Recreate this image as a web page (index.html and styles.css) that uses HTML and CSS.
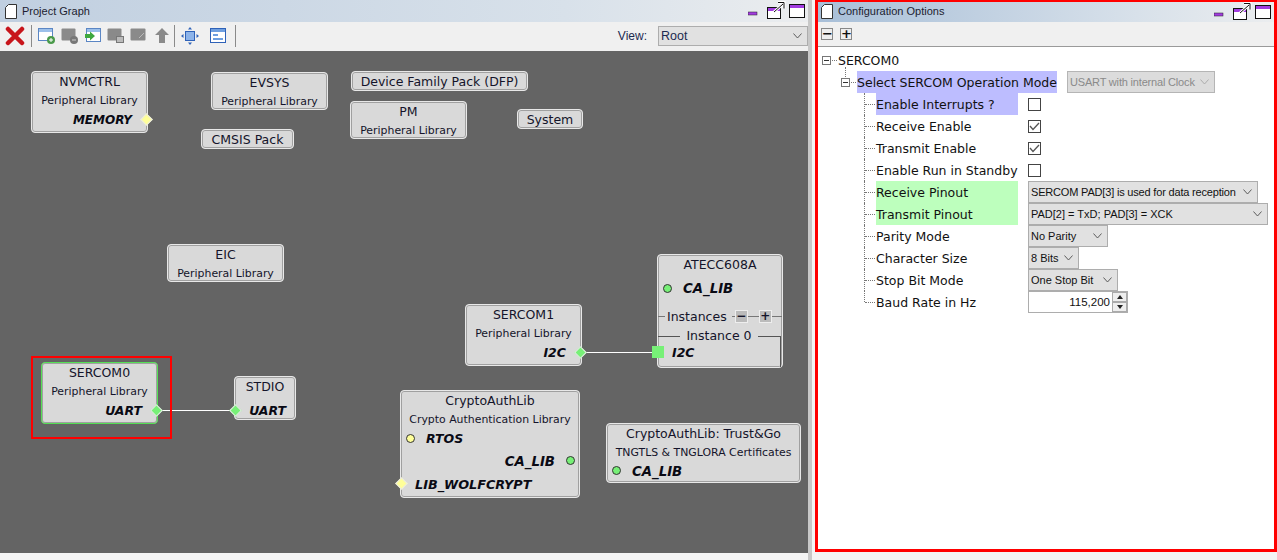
FILE: index.html
```html
<!DOCTYPE html>
<html lang="en">
<head>
  <meta charset="UTF-8">
  <title>Project Graph</title>
  <link rel="stylesheet" href="styles.css">
</head>
<body>
  <div class="graph-pane">
    <div class="title-bar">
      <svg class="doc-icon" width="12" height="15" viewBox="0 0 12 15"><path d="M3.5 .5H11.5V14.5H.5V3.5Z" fill="#fff" stroke="#333"/></svg>
      <span class="title-text">Project Graph</span>
      <div class="win-buttons">
        <svg width="60" height="18" viewBox="0 0 60 18">
          <rect x="0" y="11" width="9" height="3" fill="#a23ce0" stroke="#222" stroke-width=".5"/>
          <rect x="19.500" y="6.500" width="13" height="11" fill="#fff" stroke="#111"/>
          <rect x="20" y="7" width="12" height="3" fill="#a23ce0"/>
          <path d="M26 11L35 3M30 1.500H36V7.500" fill="none" stroke="#fff" stroke-width="3"/>
          <path d="M26 11L35 3M30 1.500H36V7.500" fill="none" stroke="#111"/>
          <rect x="41.500" y="3.500" width="15" height="13" fill="#fff" stroke="#111"/>
          <rect x="42" y="4" width="14" height="3" fill="#a23ce0"/>
        </svg>
      </div>
    </div>
    <div class="toolbar">
      <svg class="tool-x" width="20" height="20" viewBox="0 0 20 20"><path d="M3 3L17 17M17 3L3 17" stroke="#c8151b" stroke-width="4.500" stroke-linecap="round"/></svg>
      <span class="tool-sep"></span>
      <svg class="tool" width="18" height="18" viewBox="0 0 18 18"><rect x=".5" y="1.500" width="14" height="12" fill="#fff" stroke="#5b86c4"/><rect x="1" y="2" width="13" height="3" fill="#9cc0ea"/><circle cx="13" cy="13" r="4" fill="#4a9a4a"/><path d="M11 13H15M13 11V15" stroke="#fff"/></svg>
      <svg class="tool" width="18" height="18" viewBox="0 0 18 18"><rect x=".5" y="1.500" width="14" height="12" rx="1" fill="#8a8a8a"/><circle cx="13" cy="13" r="4" fill="#777"/><path d="M11 13H15" stroke="#ccc"/></svg>
      <svg class="tool" width="18" height="18" viewBox="0 0 18 18"><rect x="2.500" y="1.500" width="14" height="13" fill="#fff" stroke="#5b86c4"/><rect x="3" y="2" width="13" height="3" fill="#9cc0ea"/><path d="M1 7H6V4.500L11 9L6 13.500V11H1Z" fill="#3fa83f"/></svg>
      <svg class="tool" width="18" height="18" viewBox="0 0 18 18"><rect x=".5" y="1.500" width="14" height="12" rx="1" fill="#8a8a8a"/><rect x="9.500" y="9.500" width="7" height="6" fill="#bbb" stroke="#777"/></svg>
      <svg class="tool" width="18" height="18" viewBox="0 0 18 18"><rect x=".5" y="1.500" width="15" height="12" rx="1" fill="#8a8a8a"/><path d="M9 11L14 6" stroke="#bbb"/></svg>
      <svg class="tool" width="18" height="18" viewBox="0 0 18 18"><path d="M9 1L16 8H12V16H6V8H2Z" fill="#8a8a8a"/></svg>
      <span class="tool-sep sep-tight"></span>
      <svg class="tool tool-fit" width="18" height="18" viewBox="0 0 18 18"><rect x="4.500" y="4.500" width="9" height="9" fill="#8db4ea" stroke="#2f62b8"/><path d="M9 0L11 2.500H7ZM9 18L7 15.500H11ZM0 9L2.500 7V11ZM18 9L15.500 11V7Z" fill="#2f62b8"/></svg>
      <svg class="tool tool-panel" width="18" height="18" viewBox="0 0 18 18"><rect x="1.500" y="1.500" width="15" height="14" fill="#fff" stroke="#2f62b8"/><rect x="2" y="2" width="14" height="3" fill="#6f9fe0"/><rect x="4" y="7" width="5" height="2" fill="#6f9fe0"/><rect x="4" y="11" width="10" height="2" fill="#6f9fe0"/></svg>
      <span class="tool-sep sep-far"></span>
      <span class="view-label">View:</span>
      <div class="combo view-combo"><span class="combo-text">Root</span><svg class="chev" viewBox="0 0 10 6" preserveAspectRatio="none"><path d="M.5 .5L5 5L9.500 .5" fill="none" stroke="#555"/></svg></div>
    </div>

    <div class="canvas">
      <svg class="wires" width="808" height="502">
        <path d="M157 359.500H235M581 301.500H658" stroke="#fff"/>
      </svg>

      <div class="node n-nvmctrl">
        <div class="node-title">NVMCTRL</div>
        <div class="node-sub">Peripheral Library</div>
        <div class="node-port right">MEMORY</div>
        <span class="pin diamond yellow pin-right"></span>
      </div>
      <div class="node n-evsys">
        <div class="node-title">EVSYS</div>
        <div class="node-sub">Peripheral Library</div>
      </div>
      <div class="node n-dfp"><div class="node-title">Device Family Pack (DFP)</div></div>
      <div class="node n-pm">
        <div class="node-title">PM</div>
        <div class="node-sub">Peripheral Library</div>
      </div>
      <div class="node n-system"><div class="node-title">System</div></div>
      <div class="node n-cmsis"><div class="node-title">CMSIS Pack</div></div>
      <div class="node n-eic">
        <div class="node-title">EIC</div>
        <div class="node-sub">Peripheral Library</div>
      </div>
      <div class="node n-sercom1">
        <div class="node-title">SERCOM1</div>
        <div class="node-sub">Peripheral Library</div>
        <div class="node-port right">I2C</div>
        <span class="pin diamond green pin-right"></span>
      </div>
      <div class="node n-atecc">
        <div class="node-title">ATECC608A</div>
        <div class="node-port left cap-port">CA_LIB</div>
        <span class="pin dot green pin-atecc"></span>
        <div class="instances">
          <span class="inst-dash lead"></span>
          <span class="inst-text">Instances</span>
          <span class="inst-dash short"></span>
          <span class="inst-btn">−</span>
          <span class="inst-dash mid"></span>
          <span class="inst-btn">+</span>
          <span class="inst-dash"></span>
        </div>
        <div class="instance-box">
          <div class="instance-head">Instance 0</div>
          <div class="node-port left inst-port">I2C</div>
        </div>
        <span class="pin square green pin-inst"></span>
      </div>
      <div class="node n-sercom0 selected">
        <div class="node-title">SERCOM0</div>
        <div class="node-sub">Peripheral Library</div>
        <div class="node-port right">UART</div>
        <span class="pin diamond green pin-right"></span>
      </div>
      <div class="select-box"></div>
      <div class="node n-stdio">
        <div class="node-title">STDIO</div>
        <div class="node-port right stdio-port">UART</div>
        <span class="pin diamond green pin-stdio"></span>
      </div>
      <div class="node n-crypto">
        <div class="node-title">CryptoAuthLib</div>
        <div class="node-sub">Crypto Authentication Library</div>
        <div class="node-port left indent">RTOS</div>
        <div class="node-port right gutter">CA_LIB</div>
        <div class="node-port left wolf">LIB_WOLFCRYPT</div>
        <span class="pin dot yellow pin-rtos"></span>
        <span class="pin dot green pin-calib"></span>
        <span class="pin diamond yellow pin-wolf"></span>
      </div>
      <div class="node n-trust">
        <div class="node-title">CryptoAuthLib: Trust&amp;Go</div>
        <div class="node-sub">TNGTLS &amp; TNGLORA Certificates</div>
        <div class="node-port left indent">CA_LIB</div>
        <span class="pin dot green pin-trust"></span>
      </div>
    </div>
  </div>

  <div class="config-pane">
    <div class="title-bar">
      <svg class="doc-icon" width="12" height="15" viewBox="0 0 12 15"><path d="M3.5 .5H11.5V14.5H.5V3.5Z" fill="#fff" stroke="#333"/></svg>
      <span class="title-text">Configuration Options</span>
      <div class="win-buttons">
        <svg width="60" height="18" viewBox="0 0 60 18">
          <rect x="0" y="11" width="9" height="3" fill="#a23ce0" stroke="#222" stroke-width=".5"/>
          <rect x="19.500" y="6.500" width="13" height="11" fill="#fff" stroke="#111"/>
          <rect x="20" y="7" width="12" height="3" fill="#a23ce0"/>
          <path d="M26 11L35 3M30 1.500H36V7.500" fill="none" stroke="#fff" stroke-width="3"/>
          <path d="M26 11L35 3M30 1.500H36V7.500" fill="none" stroke="#111"/>
          <rect x="41.500" y="3.500" width="15" height="13" fill="#fff" stroke="#111"/>
          <rect x="42" y="4" width="14" height="3" fill="#a23ce0"/>
        </svg>
      </div>
    </div>
    <div class="config-tools">
      <span class="tree-btn">−</span>
      <span class="tree-btn">+</span>
    </div>
    <div class="tree">
      <div class="row row-root">
        <span class="expander"></span><span class="twig-h"></span>
        <span class="label">SERCOM0</span>
      </div>
      <div class="row row-mode">
        <span class="expander"></span><span class="twig-h"></span>
        <span class="label hl-blue">Select SERCOM Operation Mode</span>
        <div class="combo disabled mode-combo"><span class="combo-text">USART with internal Clock</span><svg class="chev" viewBox="0 0 10 6" preserveAspectRatio="none"><path d="M.5 .5L5 5L9.500 .5" fill="none" stroke="#aaa"/></svg></div>
      </div>
      <div class="row leaf"><span class="label wide hl-blue">Enable Interrupts ?</span><span class="check"></span></div>
      <div class="row leaf"><span class="label wide">Receive Enable</span><span class="check on"><svg width="11" height="9" viewBox="0 0 11 9"><path d="M1 4L4 7.500L10 1" fill="none" stroke="#555" stroke-width="1.300"/></svg></span></div>
      <div class="row leaf"><span class="label wide">Transmit Enable</span><span class="check on"><svg width="11" height="9" viewBox="0 0 11 9"><path d="M1 4L4 7.500L10 1" fill="none" stroke="#555" stroke-width="1.300"/></svg></span></div>
      <div class="row leaf"><span class="label wide">Enable Run in Standby</span><span class="check"></span></div>
      <div class="row leaf"><span class="label wide hl-green">Receive Pinout</span><div class="combo w-rx"><span class="combo-text">SERCOM PAD[3] is used for data reception</span><svg class="chev" viewBox="0 0 10 6" preserveAspectRatio="none"><path d="M.5 .5L5 5L9.500 .5" fill="none" stroke="#555"/></svg></div></div>
      <div class="row leaf"><span class="label wide hl-green">Transmit Pinout</span><div class="combo w-tx"><span class="combo-text">PAD[2] = TxD; PAD[3] = XCK</span><svg class="chev" viewBox="0 0 10 6" preserveAspectRatio="none"><path d="M.5 .5L5 5L9.500 .5" fill="none" stroke="#555"/></svg></div></div>
      <div class="row leaf"><span class="label wide">Parity Mode</span><div class="combo w-parity"><span class="combo-text">No Parity</span><svg class="chev" viewBox="0 0 10 6" preserveAspectRatio="none"><path d="M.5 .5L5 5L9.500 .5" fill="none" stroke="#555"/></svg></div></div>
      <div class="row leaf"><span class="label wide">Character Size</span><div class="combo w-size"><span class="combo-text">8 Bits</span><svg class="chev" viewBox="0 0 10 6" preserveAspectRatio="none"><path d="M.5 .5L5 5L9.500 .5" fill="none" stroke="#555"/></svg></div></div>
      <div class="row leaf"><span class="label wide">Stop Bit Mode</span><div class="combo w-stop"><span class="combo-text">One Stop Bit</span><svg class="chev" viewBox="0 0 10 6" preserveAspectRatio="none"><path d="M.5 .5L5 5L9.500 .5" fill="none" stroke="#555"/></svg></div></div>
      <div class="row leaf last"><span class="label wide">Baud Rate in Hz</span>
        <div class="spinner">
          <span class="spin-value">115,200</span>
          <div class="spin-btns"><span class="spin-btn up"></span><span class="spin-btn down"></span></div>
        </div>
      </div>
    </div>
  </div>
</body>
</html>
```

FILE: styles.css
```css
/* Basic reset */
* {
  box-sizing: border-box;
  margin: 0;
  padding: 0;
}

html, body {
  height: 560px;
  overflow: hidden;
}

body {
  display: flex;
  background-color: #f4f4f4;
  font-family: "DejaVu Sans", sans-serif;
  font-size: 12px;
  color: #111;
}

/* Panes */
.graph-pane {
  width: 812px;
  height: 560px;
  display: flex;
  flex-direction: column;
  border-right: 4px solid #c8c8c8;
}

.config-pane {
  width: 462px;
  height: 552px;
  margin-left: 3px;
  display: flex;
  flex-direction: column;
  border: solid #ff0000;
  border-width: 2px 3px 3px;
  background-color: #fff;
}

.title-bar {
  height: 22px;
  flex: none;
  display: flex;
  align-items: center;
  padding-left: 5px;
  background: linear-gradient(to right, #c0cfe0, #d8e1ea 70%, #ebedef);
}

.config-pane .title-bar {
  height: 20px;
  padding: 0 0 2px 3px;
  background: linear-gradient(to right, #a8bfd8, #d8e1ea 70%, #ebedef);
}

.doc-icon {
  flex: none;
}

.title-text {
  margin-left: 5px;
  font-family: "Liberation Sans", sans-serif;
  font-size: 11px;
  color: #1c1c30;
}

.win-buttons {
  margin-left: auto;
  align-self: flex-start;
  margin-top: 1px;
  height: 18px;
}

.config-pane .win-buttons {
  margin-top: 0;
}

/* Toolbar */
.toolbar {
  height: 29px;
  flex: none;
  display: flex;
  align-items: center;
  padding: 0 0 2px 5px;
  background-color: #f0f0f0;
}

.tool {
  margin-left: 5px;
  flex: none;
}

.tool-x {
  flex: none;
}

.tool-sep {
  width: 1px;
  height: 22px;
  flex: none;
  margin: 0 6px 0 6px;
  background-color: #8a8a8a;
}

.tool-sep.sep-tight {
  margin-left: 3px;
}

.tool-sep.sep-far {
  margin-left: 8px;
}

.tool-sep + .tool {
  margin-left: 0;
}

.tool-panel {
  margin-left: 10px;
}

.view-label {
  margin-left: auto;
  margin-right: 11px;
  font-family: "Liberation Sans", sans-serif;
  font-size: 12px;
  color: #1c2a50;
}

/* Combo boxes */
.combo {
  height: 22px;
  display: flex;
  align-items: center;
  justify-content: space-between;
  flex: none;
  padding: 0 5px 0 2px;
  border: 1px solid #adadad;
  background-color: #e1e1e1;
  font-family: "Liberation Sans", sans-serif;
  font-size: 11px;
  color: #111;
  white-space: nowrap;
}

.chev {
  width: 9px;
  height: 6px;
  flex: none;
}

.view-combo {
  width: 150px;
  height: 20px;
  font-size: 12.500px;
  color: #1c2a50;
}

.combo.disabled {
  color: #8a8a8a;
  background-color: #dcdcdc;
  border-color: #b5b5b5;
}

.mode-combo { width: 148px; margin-left: 10px; letter-spacing: -.18px; }
.w-rx { width: 230px; letter-spacing: -.18px; }
.w-tx { width: 240px; }
.w-parity { width: 80px; }
.w-size { width: 51px; }
.w-stop { width: 90px; }

/* Graph canvas */
.canvas {
  position: relative;
  width: 808px;
  height: 502px;
  background-color: #646464;
}

.wires {
  position: absolute;
  left: 0;
  top: 0;
}

.node {
  position: absolute;
  display: flex;
  flex-direction: column;
  border: 1px solid #e8e8e8;
  border-radius: 4px;
  background-color: #d9d9d9;
  box-shadow: inset 0 0 0 1px #a0a0a0;
  white-space: nowrap;
}

.node.selected {
  border-color: #55e055;
}

.node-title {
  height: 20px;
  line-height: 20px;
  text-align: center;
  font-size: 12.500px;
  color: #14142a;
}

.node-sub {
  height: 18px;
  line-height: 17px;
  text-align: center;
  font-size: 10.900px;
  color: #14142a;
}

.node-port {
  height: 20px;
  line-height: 20px;
  font-size: 12.500px;
  font-weight: bold;
  font-style: italic;
  color: #0a0a14;
}

.n-nvmctrl .node-port {
  font-size: 12px;
}

.n-trust .node-port {
  font-size: 13.300px;
}

.node-port.right {
  text-align: right;
  padding-right: 15px;
}

.node-port.left.indent {
  padding-left: 25px;
}

.node-port.gutter {
  padding-right: 24px;
  height: 22px;
  line-height: 22px;
  margin-top: 2px;
  font-size: 13.300px;
}

.node-port.wolf {
  padding-left: 14px;
  height: 24px;
  line-height: 24px;
  font-size: 12.800px;
}

.n-nvmctrl { left: 31px; top: 20px; width: 117px; height: 62px; }
.n-evsys { left: 211px; top: 21px; width: 117px; height: 38px; }
.n-dfp { left: 351px; top: 20px; width: 177px; height: 20px; }
.n-pm { left: 350px; top: 50px; width: 117px; height: 38px; }
.n-system { left: 517px; top: 58px; width: 66px; height: 20px; }
.n-cmsis { left: 201px; top: 78px; width: 93px; height: 20px; }
.n-eic { left: 167px; top: 193px; width: 117px; height: 38px; }
.n-sercom1 { left: 465px; top: 253px; width: 117px; height: 62px; }
.n-atecc { left: 657px; top: 203px; width: 126px; height: 114px; }
.n-sercom0 { left: 41px; top: 311px; width: 117px; height: 62px; }
.n-stdio { left: 234px; top: 325px; width: 62px; height: 44px; }
.n-crypto { left: 400px; top: 339px; width: 180px; height: 108px; }
.n-trust { left: 606px; top: 372px; width: 195px; height: 60px; }

.stdio-port {
  padding-right: 9px !important;
  margin-top: 4px;
}

.select-box {
  position: absolute;
  left: 31px;
  top: 305px;
  width: 141px;
  height: 83px;
  border: 2px solid #ff0000;
}

/* Pins on the node edges */
.pin {
  position: absolute;
  display: block;
}

.diamond {
  width: 9px;
  height: 9px;
  transform: rotate(45deg);
  border: 1px solid #e8e8e8;
}

.dot {
  width: 9px;
  height: 9px;
  border-radius: 50%;
  border: 1px solid #333;
}

.square {
  width: 12px;
  height: 12px;
}

.yellow { background-color: #ffff99; }
.green { background-color: #77f077; }

.pin-right { right: -4px; top: 43px; }
.pin-stdio { left: -4px; top: 29px; }
.pin-atecc { left: 5px; top: 29px; }
.pin-inst { left: -6px; top: 91px; }
.pin-rtos { left: 5px; top: 43px; }
.pin-calib { right: 4px; top: 65px; }
.pin-wolf { left: -4px; top: 88px; }
.pin-trust { left: 5px; top: 42px; }

/* ATECC instances block */
.cap-port {
  padding-left: 25px;
  margin-top: 4px;
  font-size: 13.300px;
}

.instances {
  display: flex;
  align-items: center;
  height: 20px;
  margin-top: 8px;
  font-size: 12.500px;
  color: #14142a;
}

.inst-dash {
  flex: 1;
  height: 1px;
  background-color: #777;
}

.inst-dash.lead {
  flex: none;
  width: 7px;
}

.inst-dash.short {
  flex: none;
  width: 3px;
}

.inst-dash.mid {
  flex: none;
  width: 11px;
}

.inst-text {
  margin: 0 5px 0 2px;
}

.inst-btn {
  width: 13px;
  height: 13px;
  flex: none;
  line-height: 11px;
  text-align: center;
  border: 1px solid #eee;
  background-color: #bbb;
  font-size: 12px;
  font-weight: bold;
}

.instance-box {
  height: 32px;
  margin-top: 9px;
  margin-right: 1px;
  border-top: 1px solid #555;
  border-right: 1px solid #555;
}

.instance-head {
  width: 78px;
  height: 14px;
  margin: -8px auto 0;
  line-height: 14px;
  text-align: center;
  background-color: #d9d9d9;
  font-size: 12.500px;
  color: #14142a;
}

.inst-port {
  padding-left: 14px;
  height: 18px;
  line-height: 18px;
  margin-top: 1px;
}

/* Configuration tree */
.config-tools {
  height: 25px;
  flex: none;
  display: flex;
  align-items: center;
  gap: 7px;
  padding-left: 3px;
  background-color: #f0f0f0;
  border-bottom: 1px solid #9a9a9a;
}

.tree-btn {
  width: 12px;
  height: 12px;
  line-height: 9px;
  text-align: center;
  font-size: 13px;
  font-weight: bold;
  border: 1px solid #888;
  background-color: #eee;
}

.tree {
  padding-top: 2px;
  font-size: 12.500px;
}

.row {
  position: relative;
  height: 22px;
  display: flex;
  align-items: center;
  white-space: nowrap;
}

.row-root {
  padding-left: 4px;
}

.row-mode {
  padding-left: 23px;
}

.leaf {
  padding-left: 58px;
}

.leaf::before {
  content: "";
  position: absolute;
  left: 46px;
  top: 0;
  height: 100%;
  border-left: 1px dotted #777;
}

.leaf.last::before {
  height: 50%;
}

.leaf::after {
  content: "";
  position: absolute;
  left: 47px;
  top: 50%;
  width: 10px;
  border-top: 1px dotted #777;
}

.expander {
  position: relative;
  width: 9px;
  height: 9px;
  flex: none;
  border: 1px solid #777;
  background: linear-gradient(#333, #333) center / 5px 1px no-repeat #fff;
}

.row-mode::before {
  content: "";
  position: absolute;
  left: 27px;
  top: -4px;
  height: 10px;
  border-left: 1px dotted #777;
}

.twig-h {
  width: 5px;
  flex: none;
  margin: 0 1px;
  border-top: 1px dotted #777;
}

.label {
  height: 22px;
  padding-top: 1px;
  line-height: 22px;
  color: #111;
}

.wide {
  width: 142px;
  flex: none;
  margin-right: 10px;
}

.hl-blue { background-color: #bdbdff; }
.hl-green { background-color: #bdffbd; }

.check {
  width: 13px;
  height: 13px;
  flex: none;
  display: flex;
  align-items: center;
  justify-content: center;
  border: 1px solid #444;
  background-color: #fff;
}

.spinner {
  width: 100px;
  height: 22px;
  flex: none;
  display: flex;
  align-items: center;
  border: 1px solid #adadad;
  background-color: #fff;
  font-family: "Liberation Sans", sans-serif;
  font-size: 11.500px;
}

.spin-value {
  flex: 1;
  text-align: right;
  padding-right: 2px;
}

.spin-btns {
  width: 15px;
  height: 20px;
  display: flex;
  flex-direction: column;
}

.spin-btn {
  flex: 1;
  border: 1px solid #aaa;
  background-color: #eee;
  display: flex;
  align-items: center;
  justify-content: center;
}

.spin-btn::before {
  content: "";
  border-left: 3px solid transparent;
  border-right: 3px solid transparent;
}

.spin-btn.up::before { border-bottom: 4px solid #222; }
.spin-btn.down::before { border-top: 4px solid #222; }
```
